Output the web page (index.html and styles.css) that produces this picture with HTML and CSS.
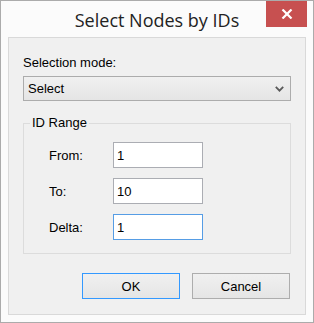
FILE: index.html
```html
<!DOCTYPE html>
<html lang="en">
<head>
  <meta charset="UTF-8" />
  <title>Select Nodes by IDs</title>
  <link rel="stylesheet" href="styles.css">
</head>
<body>
  <div class="window">
    <div class="titlebar">
      <span class="title">Select Nodes by IDs</span>
      <button class="close" aria-label="Close">
        <svg width="12" height="10" viewBox="0 0 12 10"><path d="M1.5 0.5 L10.5 9.5 M10.5 0.5 L1.5 9.5" stroke="#fff" stroke-width="2.2" fill="none"/></svg>
      </button>
    </div>
    <div class="client">
      <label class="caption" for="mode">Selection mode:</label>
      <div class="combo" id="mode">
        <span>Select</span>
        <svg width="9" height="6" viewBox="0 0 9 6"><path d="M0.8 0.8 L4.5 4.6 L8.2 0.8" stroke="#5a5a5a" stroke-width="1.8" fill="none"/></svg>
      </div>
      <fieldset class="group">
        <legend>ID Range</legend>
        <div class="row"><label for="from">From:</label><input id="from" value="1"></div>
        <div class="row"><label for="to">To:</label><input id="to" value="10"></div>
        <div class="row"><label for="delta">Delta:</label><input id="delta" class="focused" value="1"></div>
      </fieldset>
      <div class="actions">
        <button class="btn default">OK</button>
        <button class="btn">Cancel</button>
      </div>
    </div>
  </div>
</body>
</html>
```

FILE: styles.css
```css
* { box-sizing: border-box; }
html, body { margin: 0; padding: 0; background: #fff; }
body { font-family: "Liberation Sans", Arial, sans-serif; font-size: 13px; color: #000; }

.window { position: relative; width: 314px; height: 323px; border: 1px solid #ababab; background: #fbfbfb; padding: 0 7px 7px; display: flex; flex-direction: column; }
.titlebar { height: 36px; flex: none; display: flex; align-items: center; justify-content: center; }
.title { font-family: "Open Sans", "Noto Sans", sans-serif; font-size: 18px; color: #222; margin-top: 2px; }
.close { position: absolute; top: 0; right: 6px; width: 41px; height: 26px; border: none; padding: 0; background: #c75050; display: flex; align-items: center; justify-content: center; }
.close svg { display: block; }

.client { flex: 1; border: 1px solid #d9d9d9; background: #f0f0f0; padding: 17px 14px 15px; display: flex; flex-direction: column; }
.caption { display: block; line-height: 15px; }
.combo { margin-top: 6px; height: 25px; border: 1px solid #acacac; background: linear-gradient(#f0f0f0, #e5e5e5); display: flex; align-items: center; justify-content: space-between; padding: 0 6px 0 4px; line-height: 15px; }
.combo svg { display: block; }

.group { margin: 15px 0 0; padding: 12px 0 13px 6px; border: 1px solid #dcdcdc; min-width: 0; display: flex; flex-direction: column; gap: 10px; }
.group legend { padding: 0 2px; line-height: 14px; }
.row { display: flex; align-items: center; height: 26px; margin-left: 19px; }
.row label { width: 64px; }
.row input { width: 90px; height: 26px; border: 1px solid #abadb3; background: #fff; padding: 0 3px; font: inherit; color: #000; outline: none; }
.row input.focused { border-color: #569de5; }

.actions { margin-top: 19px; display: flex; justify-content: flex-end; gap: 12px; padding-right: 1px; }
.btn { width: 98px; height: 26px; border: 1px solid #adadad; background: linear-gradient(#f0f0f0, #e5e5e5); font: inherit; color: #000; padding: 0; }
.btn.default { border-color: #3399ff; }
```
